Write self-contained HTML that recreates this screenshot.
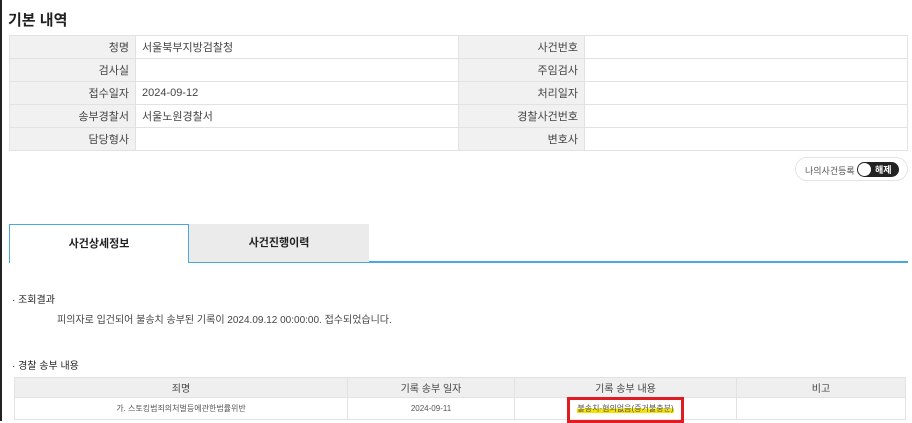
<!DOCTYPE html>
<html><head><meta charset="utf-8"><style>
*{margin:0;padding:0;box-sizing:border-box}
body{width:912px;height:421px;overflow:hidden;background:#fff;font-family:"Liberation Sans","Noto Sans CJK KR",sans-serif;color:#333;position:relative}
.abs{position:absolute}
h1{position:absolute;left:8px;top:9px;font-size:15px;font-weight:bold;color:#222}
table{border-collapse:collapse;position:absolute}
.t1{left:9px;top:35px;width:899px;font-size:11px}
.t1 td{height:23px;border:1px solid #e2e2e2}
.t1 td.l{background:#f1f1f1;text-align:right;padding-right:6px;width:126px;color:#444}
.t1 td.v{background:#fff;padding-left:6px;width:323px;color:#444}
.tg{left:795px;top:157px;width:113px;height:24px;border:1px solid #e4e4e4;border-radius:12px;font-size:9px;color:#555}
.tab{top:224px;height:38px;font-size:11px;font-weight:bold;text-align:center;line-height:38px;color:#222}
.t2{left:14px;top:377px;width:892px;font-size:10px;text-align:center}
.t2 th{background:#efefef;font-weight:normal;height:20px;border:1px solid #e2e2e2;color:#444}
.t2 td{height:22px;border:1px solid #e2e2e2;font-size:8px;color:#555}
</style></head><body>
<div class="abs" style="left:0;top:0;width:2px;height:421px;background:#222"></div>
<h1>기본 내역</h1>
<table class="t1">
<tr><td class="l">청명</td><td class="v">서울북부지방검찰청</td><td class="l">사건번호</td><td class="v"></td></tr>
<tr><td class="l">검사실</td><td class="v"></td><td class="l">주임검사</td><td class="v"></td></tr>
<tr><td class="l">접수일자</td><td class="v">2024-09-12</td><td class="l">처리일자</td><td class="v"></td></tr>
<tr><td class="l">송부경찰서</td><td class="v">서울노원경찰서</td><td class="l">경찰사건번호</td><td class="v"></td></tr>
<tr><td class="l">담당형사</td><td class="v"></td><td class="l">변호사</td><td class="v"></td></tr>
</table>
<div class="abs tg"><span class="abs" style="left:9px;top:6px">나의사건등록</span>
<div class="abs" style="left:61px;top:4px;width:42px;height:15px;background:#222;border-radius:8px"><div class="abs" style="left:1px;top:1px;width:13px;height:13px;background:#fff;border-radius:50%"></div><span class="abs" style="left:18px;top:1px;color:#fff;font-size:9px;font-weight:bold">해제</span></div></div>
<div class="abs" style="left:188px;top:261px;width:720px;height:2px;background:#4aa8e0"></div>
<div class="abs tab" style="left:9px;width:180px;background:#fff;border:1px solid #4aa8e0;border-bottom:none;height:39px">사건상세정보</div>
<div class="abs tab" style="left:189px;width:180px;background:#ebebeb">사건진행이력</div>
<div class="abs" style="left:12px;top:291px;font-size:10px;color:#222">· 조회결과</div>
<div class="abs" style="left:57px;top:311px;font-size:10px;color:#444">피의자로 입건되어 불송치 송부된 기록이 2024.09.12 00:00:00. 접수되었습니다.</div>
<div class="abs" style="left:12px;top:357px;font-size:10px;color:#222">· 경찰 송부 내용</div>
<table class="t2">
<tr><th style="width:333px">죄명</th><th style="width:167px">기록 송부 일자</th><th style="width:222px">기록 송부 내용</th><th>비고</th></tr>
<tr><td>가. 스토킹범죄의처벌등에관한법률위반</td><td>2024-09-11</td><td><span style="background:linear-gradient(transparent 50%,#f5e400 50%)">불송치-혐의없음(증거불충분)</span></td><td></td></tr>
</table>
<div class="abs" style="left:567px;top:397px;width:117px;height:26px;border:3px solid #e01b22"></div>
</body></html>
